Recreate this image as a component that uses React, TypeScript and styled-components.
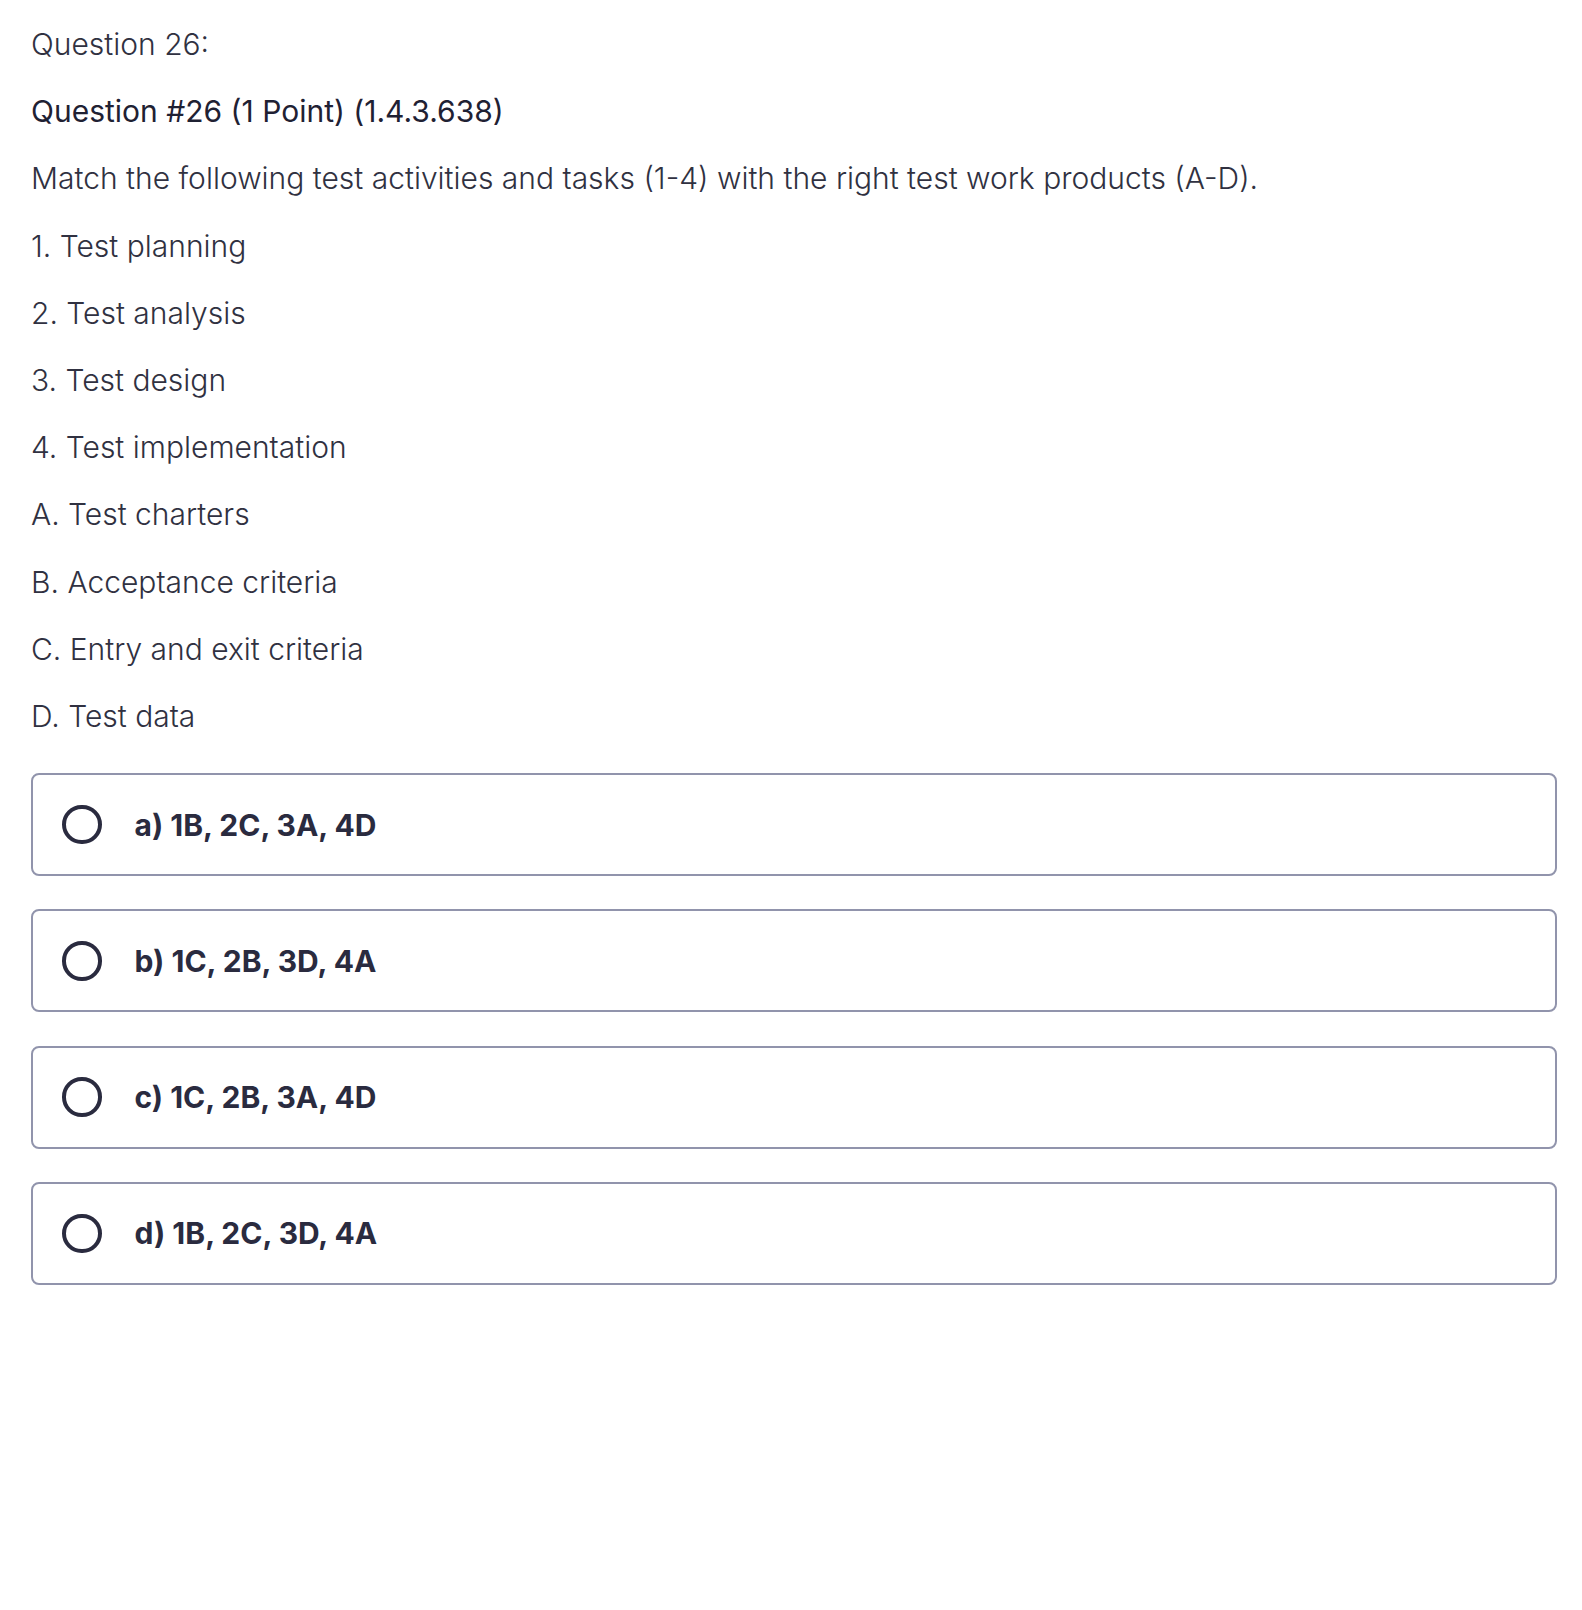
import React from "react";
import styled, { createGlobalStyle } from "styled-components";

const Global = createGlobalStyle`
  html, body { margin: 0; padding: 0; background: #ffffff; }
  body { font-family: Inter, "Noto Sans", "Liberation Sans", sans-serif; color: #303141; }
`;

const Page = styled.div`
  padding: 23px 25px 40px 31px;
  display: flex;
  flex-direction: column;
`;

const Heading = styled.div`
  font-size: 30px;
  line-height: 42px;
  font-weight: 300;
  color: #303141;
  margin-bottom: 25.2px;
`;

const Title = styled.div`
  font-size: 30px;
  line-height: 42px;
  font-weight: 400;
  color: #1f2133;
  margin-bottom: 25.2px;
`;

const Para = styled.p`
  margin: 0 0 25.2px 0;
  font-size: 30px;
  line-height: 42px;
  font-weight: 300;
  color: #303141;
`;

const Options = styled.div`
  display: flex;
  flex-direction: column;
  gap: 33.3px;
  margin-top: 11px;
`;

const Option = styled.label`
  box-sizing: border-box;
  height: 103px;
  border: 2px solid #9194ac;
  border-radius: 8px;
  display: flex;
  align-items: center;
  padding-left: 29px;
  gap: 33px;
  cursor: pointer;
`;

const Radio = styled.span`
  box-sizing: border-box;
  width: 39.5px;
  height: 39.5px;
  border-radius: 50%;
  border: 4px solid #2a2b3f;
  flex-shrink: 0;
`;

const OptionText = styled.span`
  font-size: 30px;
  font-weight: 700;
  color: #2a2b3f;
`;

const lines = [
  "1. Test planning",
  "2. Test analysis",
  "3. Test design",
  "4. Test implementation",
  "A. Test charters",
  "B. Acceptance criteria",
  "C. Entry and exit criteria",
  "D. Test data",
];

const answers = [
  "a) 1B, 2C, 3A, 4D",
  "b) 1C, 2B, 3D, 4A",
  "c) 1C, 2B, 3A, 4D",
  "d) 1B, 2C, 3D, 4A",
];

export default function App() {
  return (
    <>
      <Global />
      <Page>
        <Heading>Question 26:</Heading>
        <Title>Question #26 (1 Point) (1.4.3.638)</Title>
        <Para>
          Match the following test activities and tasks (1-4) with the right test work products (A-D).
        </Para>
        {lines.map((l) => (
          <Para key={l}>{l}</Para>
        ))}
        <Options>
          {answers.map((a) => (
            <Option key={a}>
              <Radio />
              <OptionText>{a}</OptionText>
            </Option>
          ))}
        </Options>
      </Page>
    </>
  );
}
